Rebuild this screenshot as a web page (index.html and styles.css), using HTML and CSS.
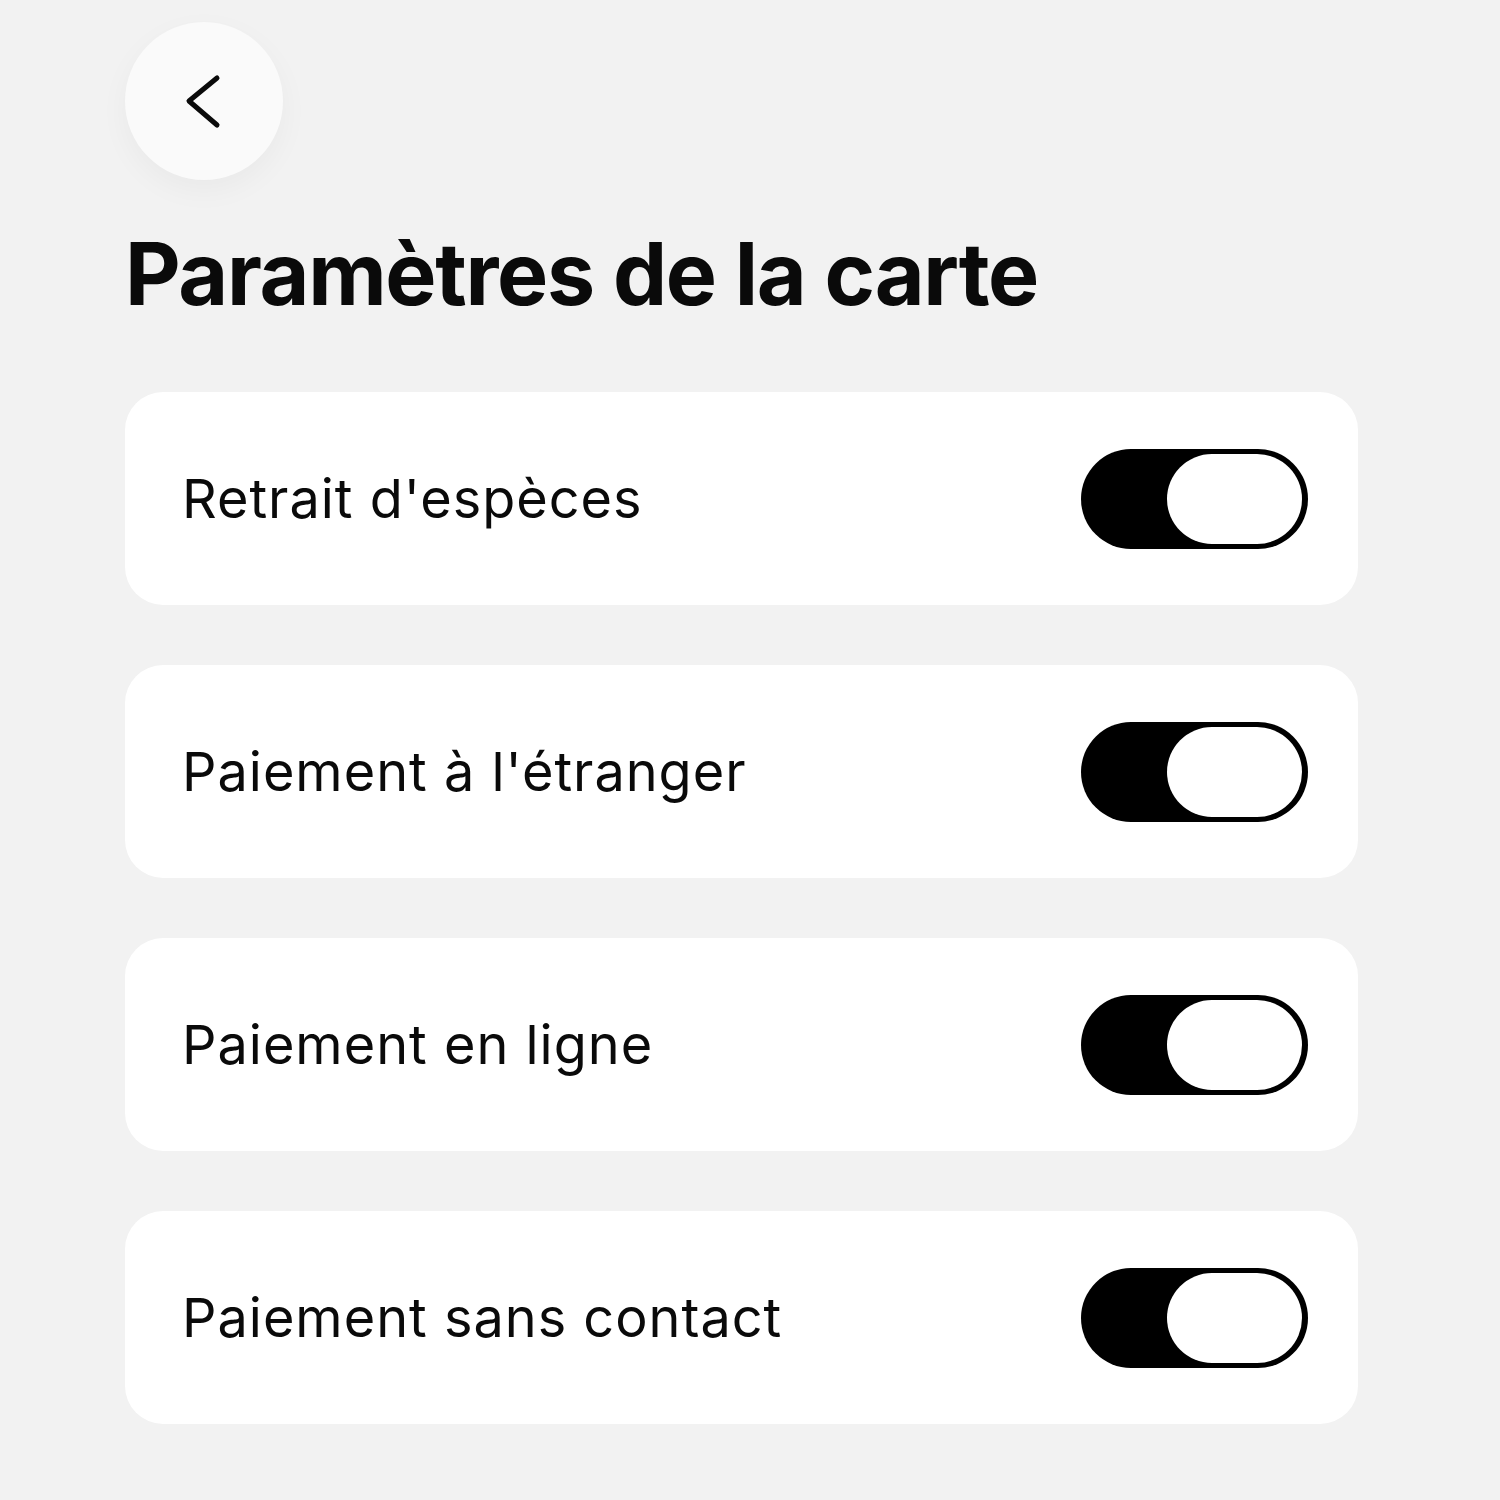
FILE: index.html
```html
<!DOCTYPE html>
<html lang="fr">
<head>
    <meta charset="UTF-8">
    <meta name="viewport" content="width=device-width, initial-scale=1.0">
    <title>Paramètres de la carte</title>
    <link rel="stylesheet" href="styles.css">
</head>
<body>
    <div class="page">
        <button class="back-btn" aria-label="Retour">
            <svg width="158" height="158" viewBox="0 0 158 158">
                <polyline points="92,56 64,79 92,103" fill="none" stroke="#0a0a0a" stroke-width="5" stroke-linecap="round" stroke-linejoin="round"/>
            </svg>
        </button>

        <h1 class="title">Paramètres de la carte</h1>

        <!-- Liste des options de la carte -->
        <ul class="settings">
            <li class="setting">
                <span class="label">Retrait d'espèces</span>
                <span class="toggle on"><span class="knob"></span></span>
            </li>
            <li class="setting">
                <span class="label">Paiement à l'étranger</span>
                <span class="toggle on"><span class="knob"></span></span>
            </li>
            <li class="setting">
                <span class="label">Paiement en ligne</span>
                <span class="toggle on"><span class="knob"></span></span>
            </li>
            <li class="setting">
                <span class="label">Paiement sans contact</span>
                <span class="toggle on"><span class="knob"></span></span>
            </li>
        </ul>
    </div>
</body>
</html>
```

FILE: styles.css
```css
body {
    margin: 0;
    background: #f2f2f2;
    font-family: Inter, "Noto Sans", sans-serif;
    color: #0a0a0a;
}
.page {
    width: 1233px;
    padding: 22px 0 0 125px;
}
.back-btn {
    display: block;
    width: 158px;
    height: 158px;
    padding: 0;
    border: none;
    border-radius: 50%;
    background: #fafafa;
    box-shadow: 0 10px 30px rgba(0, 0, 0, 0.04);
    cursor: pointer;
}
.back-btn svg {
    display: block;
}
.title {
    margin: 42px 0 66px;
    font-size: 86px;
    line-height: 104px;
    font-weight: 700;
    letter-spacing: -1.3px;
}
.settings {
    list-style: none;
    margin: 0;
    padding: 0;
    display: flex;
    flex-direction: column;
    gap: 60px;
}
.setting {
    height: 213px;
    background: #fff;
    border-radius: 38px;
    display: flex;
    align-items: center;
    justify-content: space-between;
    padding: 0 50px 0 57px;
}
.label {
    font-size: 54px;
    font-weight: 400;
    letter-spacing: 1px;
}
.toggle {
    width: 227px;
    height: 100px;
    box-sizing: border-box;
    border-radius: 50px;
    background: #000;
    display: flex;
    justify-content: flex-end;
    padding: 5px 6px;
}
.knob {
    width: 135px;
    border-radius: 45px;
    background: #fff;
}
```
